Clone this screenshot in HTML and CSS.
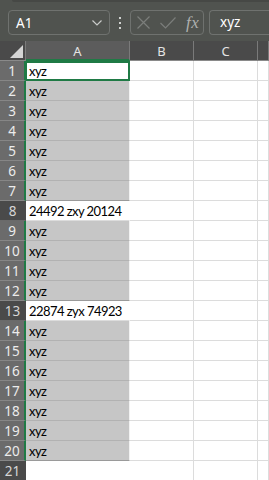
FILE: index.html
```html
<!DOCTYPE html>
<html lang="en">
<head>
  <meta charset="UTF-8">
  <title>Sheet</title>
  <link rel="stylesheet" href="styles.css">
</head>
<body>

<div id="toolbar">
  <div class="ribbon-edge"></div>
  <div class="bar">
    <div class="namebox">
      <span class="ref">A1</span>
      <svg class="chevron" width="10" height="6" viewBox="0 0 10 6">
        <polyline points="0.5,0.5 5,5 9.5,0.5" fill="none" stroke="#c9cbc9" stroke-width="1.2"/>
      </svg>
    </div>
    <div class="dots"><i></i><i></i><i></i></div>
    <div class="fbuttons">
      <svg width="13" height="13" viewBox="0 0 13 13">
        <path d="M0.5 0.5 L12.5 12.5 M12.5 0.5 L0.5 12.5" stroke="#7b7e7b" stroke-width="1.2"/>
      </svg>
      <svg width="16" height="12" viewBox="0 0 16 12">
        <polyline points="0.5,6 5.5,11 15.5,0.5" fill="none" stroke="#7b7e7b" stroke-width="1.2"/>
      </svg>
      <span class="fx">fx</span>
    </div>
    <div class="formula">xyz</div>
  </div>
</div>

<div id="sheet">
  <div class="row head">
    <div class="rh corner">
      <svg width="13" height="13" viewBox="0 0 13 13"><polygon points="13,0 13,13 0,13" fill="#d4d4d4"/></svg>
    </div>
    <div class="ch colA sel">A</div>
    <div class="ch colB">B</div>
    <div class="ch colC">C</div>
    <div class="ch colD"></div>
  </div>
  <div id="rows"></div>
</div>

<script>
  const rows = document.getElementById('rows');
  for (let i = 1; i <= 21; i++) {
    let text = 'xyz';
    let kind = 'sel';
    if (i === 1) kind = 'active';
    if (i === 8) { text = '24492 zxy 20124'; kind = 'plain'; }
    if (i === 13) { text = '22874 zyx 74923'; kind = 'plain'; }
    if (i === 21) { text = ''; kind = 'plain'; }
    const last = (i === 7 || i === 12 || i === 20) ? ' last' : '';
    const rowSel = kind === 'plain' ? '' : ' sel';
    rows.innerHTML += `
      <div class="row">
        <div class="rh${rowSel}">${i}</div>
        <div class="c colA ${kind}${last}"><span>${text}</span></div>
        <div class="c colB"></div>
        <div class="c colC"></div>
        <div class="c colD"></div>
      </div>`;
  }
</script>

</body>
</html>
```

FILE: styles.css
```css
body {
  margin: 0;
  padding: 0;
  width: 269px;
  height: 480px;
  overflow: hidden;
  background-color: #ffffff;
  font-family: "Noto Sans", sans-serif;
}

#toolbar {
  height: 41px;
  background-color: #50534f;
}

.ribbon-edge {
  height: 2px;
  margin-left: 12px;
  background-color: #464845;
  border-bottom-left-radius: 2px;
}

.bar {
  display: flex;
  align-items: center;
  height: 25px;
  margin-top: 8px;
  padding-left: 8px;
}

.namebox {
  display: flex;
  align-items: center;
  justify-content: space-between;
  box-sizing: border-box;
  width: 102px;
  height: 25px;
  padding: 0 7px 0 7px;
  border: 1px solid #6f726f;
  border-radius: 4px;
}

.ref {
  color: #ffffff;
  font-size: 13.5px;
}

.chevron {
  margin-top: 1px;
}

.dots {
  display: flex;
  flex-direction: column;
  gap: 3px;
  width: 20px;
  align-items: center;
}

.dots i {
  display: block;
  width: 2px;
  height: 2px;
  background-color: #d0d2d0;
}

.fbuttons {
  display: flex;
  align-items: center;
  box-sizing: border-box;
  width: 74px;
  height: 25px;
  padding-left: 6px;
  gap: 10px;
  border: 1px solid #6f726f;
  border-radius: 4px;
}

.fx {
  font-family: "Liberation Serif", serif;
  font-style: italic;
  font-size: 17px;
  color: #aeb0ae;
  letter-spacing: 0.5px;
}

.formula {
  box-sizing: border-box;
  flex: 1;
  height: 25px;
  margin-left: 5px;
  padding-left: 10px;
  line-height: 23px;
  border: 1px solid #6f726f;
  border-right: none;
  border-radius: 4px 0 0 4px;
  color: #ffffff;
  font-size: 13.5px;
}

.row {
  display: flex;
  height: 20px;
}

.rh {
  box-sizing: border-box;
  width: 26px;
  height: 20px;
  text-align: center;
  line-height: 20px;
  font-size: 13.5px;
  color: #d6d6d6;
  background-color: #4a4a4a;
  border-right: 1px solid #4a4a4a;
  border-bottom: 1px solid #6a6a6a;
}

.rh.sel {
  background-color: #6b6b6b;
  border-right: 2px solid #1f7a45;
  border-bottom-color: #868686;
  color: #ececec;
}

.head .rh.corner {
  display: flex;
  align-items: flex-end;
  justify-content: flex-end;
  padding: 0 2px 2px 0;
  border-right: 1px solid #7a7a7a;
  border-bottom: 1px solid #8a8a8a;
}

.ch {
  box-sizing: border-box;
  height: 20px;
  text-align: center;
  line-height: 20px;
  font-size: 13px;
  color: #e4e4e4;
  background-color: #4a4a4a;
  border-right: 1px solid #7a7a7a;
  border-bottom: 1px solid #8a8a8a;
}

.ch.sel {
  background-color: #5c5c5c;
  border-bottom: 2px solid #1f7a45;
}

.colA { width: 104px; }
.colB { width: 64px; }
.colC { width: 64px; }
.colD { flex: 1; }

.c {
  position: relative;
  box-sizing: border-box;
  height: 20px;
  background-color: #ffffff;
  border-right: 1px solid #dcdcdc;
  border-bottom: 1px solid #dcdcdc;
}

.c span {
  position: absolute;
  z-index: 1;
  left: 3px;
  top: 1px;
  white-space: nowrap;
  font-family: "Lato", sans-serif;
  font-size: 13px;
  letter-spacing: -0.55px;
  line-height: 18px;
  color: #000000;
}

.c.sel {
  background-color: #c6c6c6;
  border-right: 1px solid #f2f2f2;
  border-bottom: 1px solid #b2b2b2;
}

.c.sel.last {
  border-bottom: 1px solid #9a9a9a;
}

.c.active {
  background-color: #ffffff;
  border: 2px solid #1f7a45;
  border-left-width: 1px;
}

.c.active span {
  left: 2px;
  top: -1px;
}

.c.plain.colA {
  border-right-color: transparent;
}
```
